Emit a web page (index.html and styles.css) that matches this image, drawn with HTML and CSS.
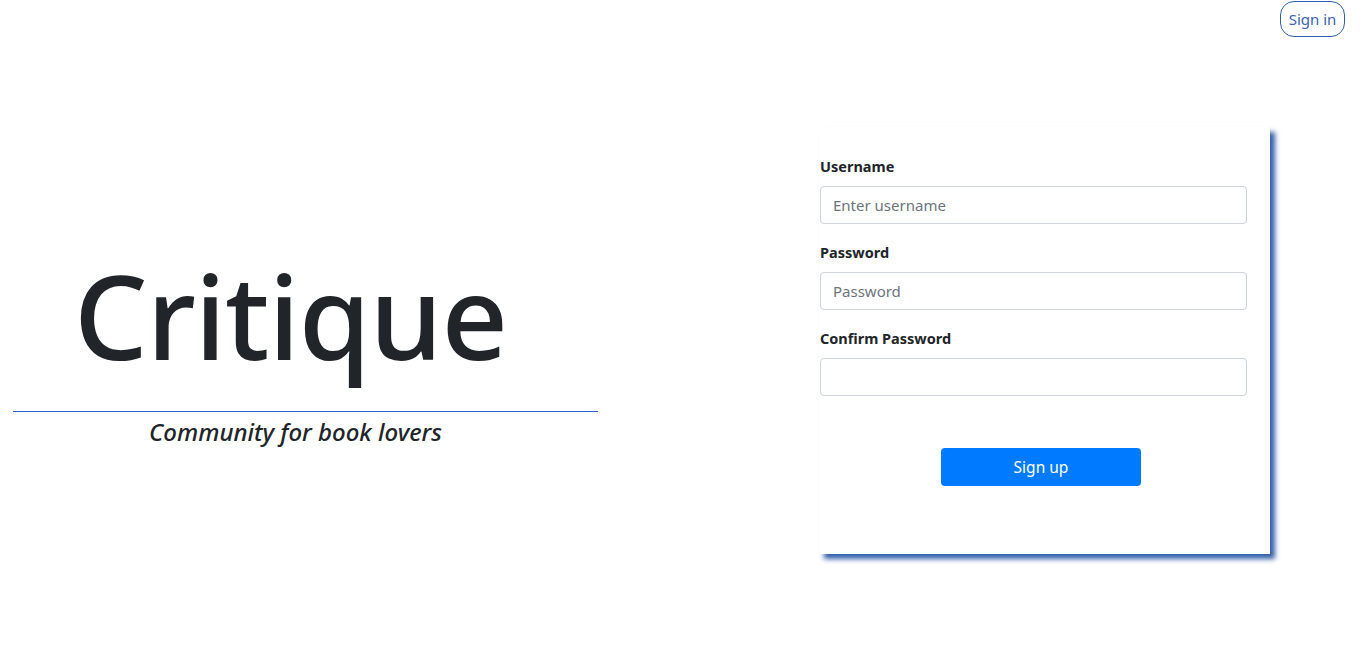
FILE: index.html
```html
<!DOCTYPE html>
<html lang="en">
<head>
<meta charset="utf-8">
<title>Critique</title>
<link rel="stylesheet" href="styles.css">
</head>
<body>
<header class="topbar">
  <button class="signin" type="button">Sign in</button>
</header>
<main class="main">
  <section class="brand">
    <h1 class="brand-title">Critique</h1>
    <div class="brand-rule"></div>
    <p class="brand-tag">Community for book lovers</p>
  </section>
  <section class="card">
    <form class="form">
      <div class="group">
        <label class="label" for="u">Username</label>
        <input class="input" id="u" type="text" placeholder="Enter username">
      </div>
      <div class="group">
        <label class="label" for="p">Password</label>
        <input class="input" id="p" type="password" placeholder="Password">
      </div>
      <div class="group">
        <label class="label" for="c">Confirm Password</label>
        <input class="input" id="c" type="password">
      </div>
      <div class="actions">
        <button class="submit" type="button">Sign up</button>
      </div>
    </form>
  </section>
</main>
</body>
</html>
```

FILE: styles.css
```css
* { box-sizing: border-box; }
html, body { margin: 0; padding: 0; background: #fff; }
body {
  font-family: "Noto Sans", "Open Sans", sans-serif;
  font-size: 16px;
  line-height: 1.5;
  color: #212529;
  width: 1366px;
  height: 647px;
  overflow: hidden;
}
.topbar {
  display: flex;
  justify-content: flex-end;
  padding: 1px 21px 0 0;
  height: 37px;
}
.signin {
  font-family: inherit;
  font-size: 15px;
  color: #3a64ae;
  background: #fff;
  border: 1px solid #2f5fb0;
  border-radius: 14px;
  width: 65px;
  height: 36px;
  padding: 0;
  line-height: 1;
}
.main {
  display: flex;
  align-items: flex-start;
}
.brand {
  margin-left: 13px;
  width: 585px;
  margin-top: 213px;
}
.brand-title {
  margin: 0;
  font-size: 116px;
  font-weight: 500;
  line-height: 130px;
  text-align: center;
  padding-right: 30px;
  letter-spacing: -1px;
}
.brand-rule {
  margin-top: 31px;
  height: 1px;
  background: #2d63c4;
}
.brand-tag {
  margin: 4px 0 0;
  text-align: center;
  font-style: italic;
  font-weight: 500;
  font-size: 24px;
  line-height: 32px;
  padding-right: 20px;
}
.card {
  margin-left: 221px;
  margin-top: 90px;
  width: 451px;
  height: 427px;
  padding: 27px 23px 0 1px;
  background: #fff;
  box-shadow: 5px 5px 5px #3560ab;
}
.group { margin-bottom: 16px; }
.label {
  display: block;
  font-weight: 700;
  font-size: 14.5px;
  line-height: 24px;
  margin-bottom: 8px;
}
.input {
  display: block;
  width: 427px;
  height: 38px;
  padding: 6px 12px;
  font-family: inherit;
  font-size: 15px;
  color: #495057;
  border: 1px solid #ced4da;
  border-radius: 4px;
  background: #fff;
}
.input::placeholder { color: #6c757d; }
.actions {
  padding-top: 36px;
  padding-left: 121px;
}
.submit {
  width: 200px;
  height: 38px;
  background: #007bff;
  color: #fff;
  border: 0;
  border-radius: 4px;
  font-family: inherit;
  font-size: 15.5px;
}
```
